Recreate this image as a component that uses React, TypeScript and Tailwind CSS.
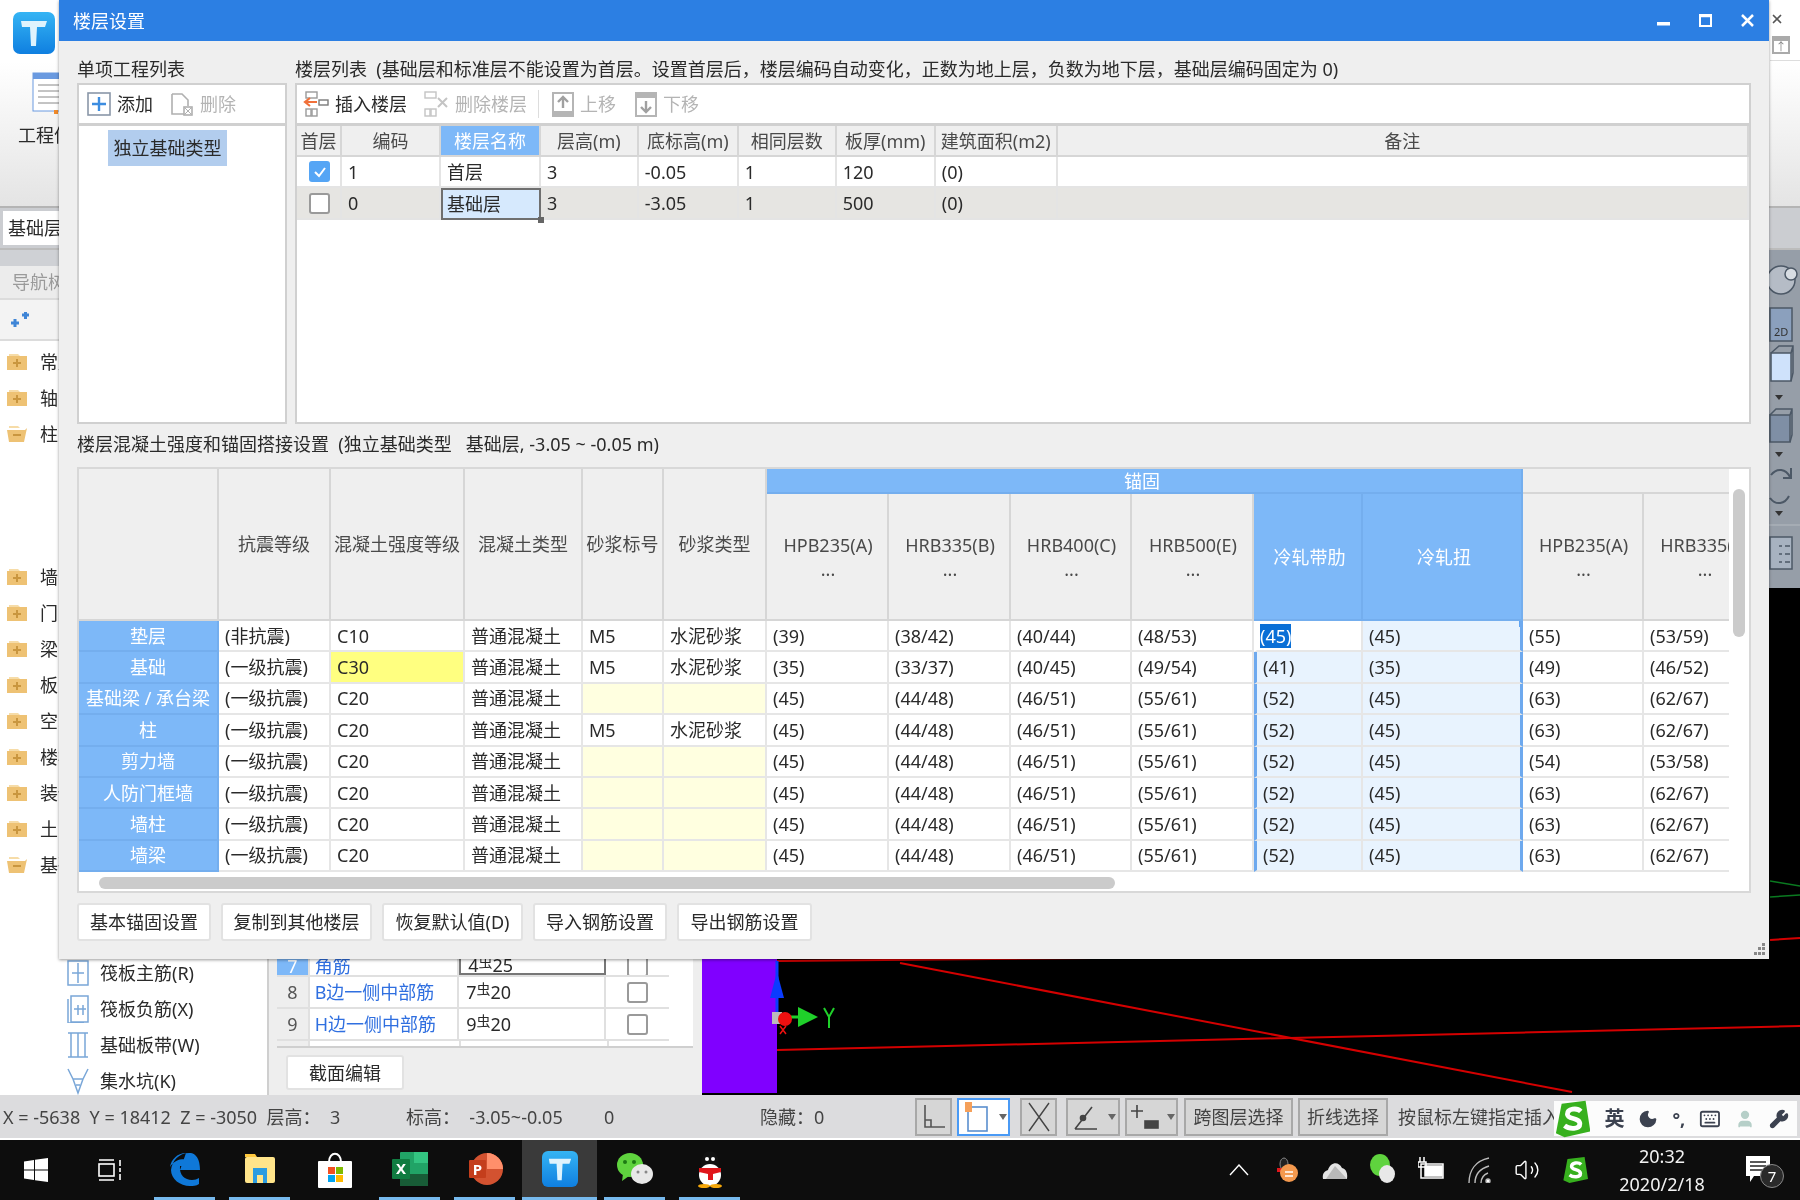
import { Keyboard, Moon, User, Volume2, Wrench, X } from "lucide-react"
import type { ReactNode } from "react"

const upperCols = [45, 99, 100, 98, 100, 98, 99, 122, 692]
const lowerCols = [140, 112, 134, 118, 81, 103, 122, 122, 121, 122, 109, 160, 121, 122]

const rows = [
  ["垫层", "(非抗震)", "C10", "M5", "水泥砂浆", "(39)", "(38/42)", "(40/44)", "(48/53)", "(45)", "(45)", "(55)", "(53/59)"],
  ["基础", "(一级抗震)", "C30", "M5", "水泥砂浆", "(35)", "(33/37)", "(40/45)", "(49/54)", "(41)", "(35)", "(49)", "(46/52)"],
  ["基础梁 / 承台梁", "(一级抗震)", "C20", "", "", "(45)", "(44/48)", "(46/51)", "(55/61)", "(52)", "(45)", "(63)", "(62/67)"],
  ["柱", "(一级抗震)", "C20", "M5", "水泥砂浆", "(45)", "(44/48)", "(46/51)", "(55/61)", "(52)", "(45)", "(63)", "(62/67)"],
  ["剪力墙", "(一级抗震)", "C20", "", "", "(45)", "(44/48)", "(46/51)", "(55/61)", "(52)", "(45)", "(54)", "(53/58)"],
  ["人防门框墙", "(一级抗震)", "C20", "", "", "(45)", "(44/48)", "(46/51)", "(55/61)", "(52)", "(45)", "(63)", "(62/67)"],
  ["墙柱", "(一级抗震)", "C20", "", "", "(45)", "(44/48)", "(46/51)", "(55/61)", "(52)", "(45)", "(63)", "(62/67)"],
  ["墙梁", "(一级抗震)", "C20", "", "", "(45)", "(44/48)", "(46/51)", "(55/61)", "(52)", "(45)", "(63)", "(62/67)"],
]

const navItems = [
  { name: "常用构件类型", open: false },
  { name: "轴线", open: false },
  { name: "柱", open: true },
]
const navItems2 = ["墙", "门窗洞", "梁", "板", "空心楼盖", "楼梯", "装修", "土方"]

function Folder({ open }: { open?: boolean }) {
  return (
    <svg width="22" height="20" viewBox="0 0 22 20" className="shrink-0">
      <path d="M3 2h9l2 2H3z" fill="#f6dca8" />
      <path d={open ? "M1 6h18l2-2-3 14H3z" : "M1 4h20v14H1z"} fill="#eec274" />
      <path d={open ? "M7 11h8" : "M11 7v8M7 11h8"} stroke="#c9963f" strokeWidth="2" />
    </svg>
  )
}

function TLogo({ size = 42 }: { size?: number }) {
  return (
    <svg width={size} height={size} viewBox="0 0 42 42" className="shrink-0">
      <defs>
        <linearGradient id="tlogo" x1="0" y1="0" x2="0" y2="1">
          <stop offset="0" stopColor="#35b4f4" />
          <stop offset="1" stopColor="#0f7fe0" />
        </linearGradient>
      </defs>
      <rect width="42" height="42" rx="7" fill="url(#tlogo)" />
      <path d="M8 9h26l-2 6H24l-1 19h-5l-1-19H9z" fill="#dff3fd" />
    </svg>
  )
}

function SLogo({ size = 38 }: { size?: number }) {
  return (
    <svg width={size} height={size} viewBox="0 0 38 38">
      <path d="M8 3 33 0l5 32-27 6L2 34z" fill="#37b01e" />
      <path d="M28 11c-4-4-14-3-14 3 0 6 13 3 13 10 0 6-11 6-16 2" fill="none" stroke="#fff" strokeWidth="5" />
    </svg>
  )
}

function ToolBtn({ icon, label, disabled, width }: { icon: ReactNode; label: string; disabled?: boolean; width: string }) {
  return (
    <div className={`flex h-[36px] items-center gap-[6px] pl-[5px] ${width} ${disabled ? "text-[#b4b4b4]" : "text-[#2a2a2a]"}`}>
      {icon}
      <span>{label}</span>
    </div>
  )
}

function MoveIcon({ down }: { down?: boolean }) {
  return (
    <svg width="22" height="25" viewBox="0 0 22 25">
      <rect x="1" y="1" width="20" height="23" fill="#fff" stroke="#b5b5b5" strokeWidth="2" />
      <rect x="1" y={down ? 1 : 19} width="20" height="5" fill="#b5b5b5" />
      <path d={down ? "M11 9v11M6 15l5 5 5-5" : "M11 16V5M6 10l5-5 5 5"} fill="none" stroke="#a0a0a0" strokeWidth="2.4" />
    </svg>
  )
}

function UpperTable() {
  const base = "border-r-2 border-b-2 border-[#d6d6d6] font-normal p-0 whitespace-nowrap"
  const head = `${base} bg-[#efefef] text-[#4a4a4a]`
  const cell = "border-r-2 border-b-2 border-[#e4e4e4] px-[6px] text-[#2a2a2a]"
  return (
    <table className="table-fixed border-separate border-spacing-0">
      <colgroup>
        {upperCols.map((w, i) => (
          <col key={i} style={{ width: w }} />
        ))}
      </colgroup>
      <thead>
        <tr className="h-[31px]">
          <th className={head}>首层</th>
          <th className={head}>编码</th>
          <th className={`${base} bg-[#7db8f8] text-white`}>楼层名称</th>
          <th className={head}>层高(m)</th>
          <th className={head}>底标高(m)</th>
          <th className={head}>相同层数</th>
          <th className={head}>板厚(mm)</th>
          <th className={head}>建筑面积(m2)</th>
          <th className={head}>备注</th>
        </tr>
      </thead>
      <tbody>
        <tr className="h-[31px]">
          <td className={`${cell} pl-[12px]`}>
            <div className="flex h-[21px] w-[21px] items-center justify-center rounded-[3px] bg-[#55a5f5]">
              <svg width="14" height="12" viewBox="0 0 14 12">
                <path d="M2 6l4 4 6-8" fill="none" stroke="#fff" strokeWidth="2" />
              </svg>
            </div>
          </td>
          <td className={cell}>1</td>
          <td className={cell}>首层</td>
          <td className={cell}>3</td>
          <td className={cell}>-0.05</td>
          <td className={cell}>1</td>
          <td className={cell}>120</td>
          <td className={cell}>(0)</td>
          <td className={cell}></td>
        </tr>
        <tr className="h-[32px] bg-[#e6e5e2]">
          <td className={`${cell} pl-[12px]`}>
            <div className="h-[21px] w-[21px] rounded-[3px] border-2 border-[#9a9a9a] bg-white" />
          </td>
          <td className={cell}>0</td>
          <td className="relative border-2 border-[#6f6f6f] bg-[#d6e9fd] px-[4px] text-[#2a2a2a]">
            基础层
            <span className="absolute -right-[5px] -bottom-[5px] h-[6px] w-[6px] bg-[#666]" />
          </td>
          <td className={cell}>3</td>
          <td className={cell}>-3.05</td>
          <td className={cell}>1</td>
          <td className={cell}>500</td>
          <td className={cell}>(0)</td>
          <td className={cell}></td>
        </tr>
      </tbody>
    </table>
  )
}

function LowerTable() {
  const head = "border-r-2 border-b-2 border-[#d6d6d6] bg-[#efefef] font-normal text-[#4a4a4a] p-0 whitespace-nowrap"
  const blue = "border-r-2 border-b-2 border-[#74aeee] bg-[#7db8f8] font-normal text-white p-0"
  const cell = "border-r-2 border-b-2 border-[#e6e6e6] px-[6px] text-[#2a2a2a] whitespace-nowrap overflow-hidden"
  const steel = (name: string) => (
    <div className="flex flex-col items-center gap-[6px] pl-[2px]">
      <span>{name}</span>
      <span>...</span>
    </div>
  )
  return (
    <table className="table-fixed border-separate border-spacing-0" style={{ width: lowerCols.reduce((a, b) => a + b, 0) }}>
      <colgroup>
        {lowerCols.map((w, i) => (
          <col key={i} style={{ width: w }} />
        ))}
      </colgroup>
      <thead>
        <tr className="h-[25px]">
          <th rowSpan={2} className={head}></th>
          <th rowSpan={2} className={head}>抗震等级</th>
          <th rowSpan={2} className={head}>混凝土强度等级</th>
          <th rowSpan={2} className={head}>混凝土类型</th>
          <th rowSpan={2} className={head}>砂浆标号</th>
          <th rowSpan={2} className={head}>砂浆类型</th>
          <th colSpan={6} className={`${blue} pr-[4px]`}>锚固</th>
          <th colSpan={2} className={head}></th>
        </tr>
        <tr className="h-[127px]">
          <th className={head}>{steel("HPB235(A)")}</th>
          <th className={head}>{steel("HRB335(B)")}</th>
          <th className={head}>{steel("HRB400(C)")}</th>
          <th className={head}>{steel("HRB500(E)")}</th>
          <th className={`${blue} pl-[4px]`}>冷轧带肋</th>
          <th className={`${blue} pl-[4px]`}>冷轧扭</th>
          <th className={head}>{steel("HPB235(A)")}</th>
          <th className={head}>{steel("HRB335(B)")}</th>
        </tr>
      </thead>
      <tbody>
        {rows.map((r, i) => (
          <tr key={i} className="h-[31.4px]">
            <td className="border-r-2 border-b-2 border-[#74aeee] bg-[#7db8f8] p-0 text-center whitespace-nowrap text-white">{r[0]}</td>
            <td className={cell}>{r[1]}</td>
            <td className={`${cell} ${r[2] === "C30" ? "bg-[#ffff80]" : ""}`}>{r[2]}</td>
            <td className={cell}>普通混凝土</td>
            <td className={`${cell} ${r[3] ? "" : "bg-[#ffffe0]"}`}>{r[3]}</td>
            <td className={`${cell} ${r[4] ? "" : "bg-[#ffffe0]"}`}>{r[4]}</td>
            {r.slice(5).map((v, j) => {
              if (j === 4) {
                return (
                  <td key={j} className={`${cell} border-l-[3px] ${i === 0 ? "border-l-white bg-white !pl-[3px]" : "border-l-[#6ea9ee] bg-[#e8f3fe]"}`}>
                    {i === 0 ? <span className="bg-[#0a6fd6] text-white">{v}</span> : v}
                  </td>
                )
              }
              if (j === 5) {
                return (
                  <td key={j} className={`${cell} relative border-r-[3px] border-r-[#6ea9ee] bg-[#e8f3fe]`}>
                    {v}
                    {i === 0 && <span className="absolute top-0 -right-[5px] h-[6px] w-[6px] bg-[#5fa4f2]" />}
                  </td>
                )
              }
              return (
                <td key={j} className={cell}>
                  {v}
                </td>
              )
            })}
            <td className={cell}></td>
          </tr>
        ))}
      </tbody>
    </table>
  )
}

function FloorDialog() {
  return (
    <div className="absolute top-0 left-[59px] flex h-[959px] w-[1710px] flex-col bg-[#efefef] shadow-[0_1px_3px_rgba(0,0,0,0.4)]">
      <div className="flex h-[41px] shrink-0 items-center bg-[#2c7fe3] pr-[15px] pl-[14px] text-white">
        <span>楼层设置</span>
        <div className="ml-auto flex items-center gap-[29px]">
          <svg width="13" height="13" viewBox="0 0 13 13">
            <rect x="0" y="8" width="13" height="3.5" fill="#fff" />
          </svg>
          <svg width="13" height="13" viewBox="0 0 13 13" fill="none" stroke="#fff" strokeWidth="2">
            <rect x="1" y="1" width="11" height="11" />
            <path d="M0 2h13" strokeWidth="2.5" />
          </svg>
          <svg width="13" height="13" viewBox="0 0 13 13" fill="none" stroke="#fff" strokeWidth="2.5">
            <path d="M1 1l11 11M12 1 1 12" />
          </svg>
        </div>
      </div>
      <div className="flex flex-1 flex-col px-[18px] pt-[19px]">
        <div className="flex h-[364px] shrink-0 gap-[8px]">
          <div className="flex w-[210px] shrink-0 flex-col">
            <div className="h-[23px] text-[#2a2a2a]">单项工程列表</div>
            <div className="flex flex-1 flex-col border-2 border-[#d0d0d0] bg-white">
              <div className="flex h-[41px] shrink-0 items-center gap-[2px] border-b-3 border-[#d0d0d0] pl-[3px]">
                <ToolBtn
                  width="w-[81px]"
                  label="添加"
                  icon={
                    <svg width="24" height="24" viewBox="0 0 24 24">
                      <rect x="1" y="1" width="22" height="22" fill="none" stroke="#8a97a8" strokeWidth="1.6" />
                      <path d="M12 5v14M5 12h14" stroke="#3d8de0" strokeWidth="2.4" />
                    </svg>
                  }
                />
                <ToolBtn
                  width="w-[78px]"
                  disabled
                  label="删除"
                  icon={
                    <svg width="24" height="24" viewBox="0 0 24 24" fill="none" stroke="#b0b0b0" strokeWidth="1.6">
                      <path d="M2 2h10l6 6v6M2 2v20h12" />
                      <rect x="14" y="15" width="8" height="8" />
                      <path d="M15 16l6 6M21 16l-6 6" strokeWidth="1" />
                    </svg>
                  }
                />
              </div>
              <div className="pt-[4px] pl-[29px]">
                <div className="flex h-[36px] w-[119px] items-center justify-center bg-[#b2cdee] text-[#2a2a2a]">独立基础类型</div>
              </div>
            </div>
          </div>
          <div className="flex flex-1 flex-col overflow-hidden">
            <div className="h-[23px] whitespace-pre text-[#2a2a2a]">
              楼层列表  (基础层和标准层不能设置为首层。设置首层后，楼层编码自动变化，正数为地上层，负数为地下层，基础层编码固定为 0)
            </div>
            <div className="flex flex-1 flex-col overflow-hidden border-2 border-[#d0d0d0] bg-white">
              <div className="flex h-[41px] shrink-0 items-center border-b-3 border-[#d0d0d0] pl-[1px]">
                <ToolBtn
                  width="w-[120px]"
                  label="插入楼层"
                  icon={
                    <svg width="26" height="26" viewBox="0 0 26 26" fill="none" stroke="#9a9a9a" strokeWidth="1.4">
                      <rect x="3" y="1" width="11" height="6" />
                      <rect x="3" y="18" width="5" height="7" />
                      <rect x="9" y="18" width="5" height="7" />
                      <rect x="16" y="9" width="9" height="5" stroke="#7a7a7a" />
                      <path d="M14 11H3M7 7l-5 4 5 4" stroke="#f0703a" strokeWidth="2.2" />
                    </svg>
                  }
                />
                <ToolBtn
                  width="w-[120px]"
                  disabled
                  label="删除楼层"
                  icon={
                    <svg width="26" height="26" viewBox="0 0 26 26" fill="none" stroke="#c4c4c4" strokeWidth="1.4">
                      <rect x="2" y="1" width="11" height="6" />
                      <rect x="2" y="18" width="5" height="7" />
                      <rect x="8" y="18" width="5" height="7" />
                      <path d="M15 7l9 9M24 7l-9 9" strokeWidth="2" />
                    </svg>
                  }
                />
                <div className="mr-[8px] h-[28px] w-px bg-[#ddd]" />
                <ToolBtn width="w-[83px]" disabled label="上移" icon={<MoveIcon />} />
                <ToolBtn width="w-[83px]" disabled label="下移" icon={<MoveIcon down />} />
              </div>
              <UpperTable />
            </div>
          </div>
        </div>
        <div className="flex h-[43px] shrink-0 items-center whitespace-pre pb-[3px] text-[#2a2a2a]">
          楼层混凝土强度和锚固搭接设置  (独立基础类型   基础层, -3.05 ~ -0.05 m)
        </div>
        <div className="flex h-[426px] shrink-0 flex-col border-2 border-[#d8d8d8] bg-white">
          <div className="flex h-[404px] shrink-0">
            <div className="h-full w-[1650px] overflow-hidden">
              <LowerTable />
            </div>
            <div className="ml-[4px] pt-[20px]">
              <div className="h-[148px] w-[12px] rounded-full bg-[#cbcbcb]" />
            </div>
          </div>
          <div className="mt-[4px] ml-[20px] h-[12px] w-[1016px] rounded-full bg-[#cbcbcb]" />
        </div>
        <div className="mt-[10px] flex gap-[10px] text-[#2a2a2a]">
          {[
            ["基本锚固设置", "w-[134px]"],
            ["复制到其他楼层", "w-[151px]"],
            ["恢复默认值(D)", "w-[141px]"],
            ["导入钢筋设置", "w-[134px]"],
            ["导出钢筋设置", "w-[135px]"],
          ].map(([label, w]) => (
            <div key={label} className={`flex h-[38px] items-center justify-center rounded-[3px] border-2 border-[#e2e2e2] bg-white whitespace-nowrap ${w}`}>
              {label}
            </div>
          ))}
        </div>
      </div>
      <svg width="14" height="14" viewBox="0 0 14 14" className="absolute right-[3px] bottom-[3px]" fill="#888">
        <rect x="10" y="1" width="3" height="3" />
        <rect x="6" y="5" width="3" height="3" />
        <rect x="10" y="5" width="3" height="3" />
        <rect x="2" y="10" width="3" height="3" />
        <rect x="6" y="10" width="3" height="3" />
        <rect x="10" y="10" width="3" height="3" />
      </svg>
    </div>
  )
}

function Sidebar() {
  const bottomNav = [
    { label: "筏板主筋(R)", d: "M2 2h20v24H2zM12 4v20M6 14h12" },
    { label: "筏板负筋(X)", d: "M5 1h17v26H5zM2 4v24h16M8 14h12M12 10v10M17 10v10" },
    { label: "基础板带(W)", d: "M2 2h20M2 26h20M5 2v24M12 2v24M19 2v24" },
    { label: "集水坑(K)", d: "M2 2l5 10h10l5-10M7 12l5 14 5-14M10 18h4" },
  ]
  return (
    <div className="flex w-[269px] shrink-0 flex-col overflow-hidden border-r-2 border-[#cfcfcf] bg-white">
      <div className="h-[16px] shrink-0 bg-[#cfd1d5]" />
      <div className="flex h-[34px] shrink-0 items-center border-b-2 border-[#dcdcdc] bg-[#ececec] pl-[12px] text-[#9a9a9a]">导航树</div>
      <div className="flex h-[41px] shrink-0 items-center border-b-2 border-[#dcdcdc] bg-[#f3f3f3] pl-[10px]">
        <svg width="20" height="20" viewBox="0 0 20 20" stroke="#3f85d6" strokeWidth="3">
          <path d="M1 13h8M5 9v8M12 5h7M15.5 2v7" />
        </svg>
      </div>
      <div className="flex flex-col pt-[3px]">
        {navItems.map((n) => (
          <div key={n.name} className="flex h-[36px] items-center gap-[12px] pl-[6px] whitespace-nowrap text-[#2a2a2a]">
            <Folder open={n.open} />
            {n.name}
          </div>
        ))}
        <div className="h-[107px]" />
        {navItems2.map((n) => (
          <div key={n} className="flex h-[36px] items-center gap-[12px] pl-[6px] whitespace-nowrap text-[#2a2a2a]">
            <Folder />
            {n}
          </div>
        ))}
        <div className="flex h-[36px] items-center gap-[12px] pl-[6px] whitespace-nowrap text-[#2a2a2a]">
          <Folder open />
          基础
        </div>
        <div className="h-[72px]" />
        {bottomNav.map((n) => (
          <div key={n.label} className="flex h-[36px] items-center gap-[10px] pl-[66px] whitespace-nowrap text-[#2a2a2a]">
            <svg width="24" height="28" viewBox="0 0 24 28" fill="none" stroke="#7aa7d8" strokeWidth="1.5" className="shrink-0">
              <path d={n.d} />
            </svg>
            {n.label}
          </div>
        ))}
      </div>
    </div>
  )
}

function SectionPanel() {
  const rebarRows = [
    { no: "7", name: "角筋", value: "4", dia: "25", on: true },
    { no: "8", name: "B边一侧中部筋", value: "7", dia: "20" },
    { no: "9", name: "H边一侧中部筋", value: "9", dia: "20" },
  ]
  return (
    <div className="flex w-[433px] shrink-0 flex-col justify-end bg-[#eeeeee] pl-[8px]">
      <div className="w-[416px] border-b-2 border-[#cfcfcf] bg-white pr-[24px]">
        {rebarRows.map((r) => (
          <div key={r.no} className={`flex border-b-2 border-[#e0e0e0] ${r.on ? "h-[20px] items-end overflow-hidden" : "h-[32px] items-center"}`}>
            <div className={`flex h-full w-[33px] items-center justify-center border-r-2 border-[#e0e0e0] text-[#555] ${r.on ? "bg-[#7db8f8] text-white" : "bg-[#eee]"}`}>{r.no}</div>
            <div className="flex h-full w-[151px] items-center border-r-2 border-[#e0e0e0] pl-[5px] text-[#2f6fe0]">{r.name}</div>
            <div className={`flex h-full w-[148px] items-center pl-[7px] text-[#2a2a2a] ${r.on ? "border-x-2 border-b-2 border-[#777]" : "border-r-2 border-[#e0e0e0]"}`}>
              {r.value}
              <span className="relative -top-[3px] text-[14px]">虫</span>
              {r.dia}
            </div>
            <div className="flex h-full w-[64px] items-center justify-center">
              <div className="h-[21px] w-[21px] shrink-0 rounded-[3px] border-2 border-[#9a9a9a] bg-white" />
            </div>
          </div>
        ))}
        <div className="flex h-[5px] w-full overflow-hidden">
          <div className="h-full w-[33px] border-r-2 border-[#e0e0e0] bg-[#eee]" />
          <div className="h-full w-[151px] border-r-2 border-[#e0e0e0]" />
          <div className="h-full w-[148px] border-r-2 border-[#e0e0e0]" />
        </div>
      </div>
      <div className="flex h-[47px] items-start pt-[7px] pl-[9px]">
        <div className="flex h-[35px] w-[118px] items-center justify-center rounded-[3px] border-2 border-[#e2e2e2] bg-white text-[#2a2a2a]">截面编辑</div>
      </div>
    </div>
  )
}

function Canvas() {
  return (
    <div className="relative flex-1 overflow-hidden bg-black">
      <svg width="1098" height="843" viewBox="0 0 1098 843" className="absolute inset-0">
        <rect x="0" width="75" height="843" fill="#8000ff" />
        <g stroke="#d40000" strokeWidth="2" fill="none">
          <path d="M75 711 498 707" />
          <path d="M198 713 870 842" />
          <path d="M75 800 1098 776" />
          <path d="M1068 690l30-2" />
        </g>
        <path d="M1068 631l30 5M1068 647l30-2" stroke="#0a7a20" strokeWidth="1.5" />
        <path d="M75 711v54" stroke="#0b3cff" strokeWidth="3" />
        <path d="M75 722l-7 26h14z" fill="#0b3cff" />
        <path d="M96 767h-14" stroke="#1fd02a" strokeWidth="3" />
        <path d="M96 757l20 10-20 10z" fill="#1fd02a" />
        <rect x="70" y="762" width="10" height="12" fill="#bbb" />
        <circle cx="83" cy="769" r="7" fill="#f01010" />
        <path d="M78 776l6 8M84 776l-6 8" stroke="#f01010" strokeWidth="1.5" />
        <path d="M122 758l5 9 5-9M127 767v11" stroke="#1fd02a" strokeWidth="2" fill="none" />
      </svg>
      <div className="absolute top-0 right-0 flex h-[338px] w-[31px] flex-col items-start bg-[#969ea8]">
        <svg width="31" height="338" viewBox="0 0 31 338" fill="none" stroke="#4c5866" strokeWidth="1.5">
          <circle cx="12" cy="30" r="14" fill="#b5bcc6" />
          <circle cx="22" cy="24" r="6" fill="#d8dde3" />
          <rect x="1" y="58" width="22" height="33" fill="#8ba0bd" />
          <rect x="2" y="103" width="20" height="28" fill="#cfe2fb" />
          <path d="M2 103l8-7h14v27l-2 8M22 103l2-7" />
          <path d="M6 145h8l-4 5z" fill="#333" stroke="none" />
          <rect x="1" y="165" width="20" height="27" fill="#7f8fa5" />
          <path d="M1 165l6-6h16v26l-2 7M21 165l2-6" />
          <path d="M6 202h8l-4 5z" fill="#333" stroke="none" />
          <path d="M2 225c6-8 15-6 19 2M22 218v10h-8M1 248c6 8 15 6 19-2" strokeWidth="2" />
          <path d="M6 261h8l-4 5z" fill="#333" stroke="none" />
          <path d="M0 275h31" stroke="#aab0b8" />
          <rect x="1" y="287" width="22" height="32" fill="#a7b2c0" />
          <path d="M10 296h3M10 304h3M10 312h3M16 296h5M16 304h5M16 312h5" />
        </svg>
        <span className="absolute top-[76px] left-[5px] text-[11px] leading-none text-[#333]">2D</span>
      </div>
    </div>
  )
}

function TaskItem({ children, line, active }: { children: ReactNode; line?: boolean; active?: boolean }) {
  return (
    <div className={`flex h-full w-[75px] shrink-0 flex-col items-center ${active ? "bg-[#3a3a3a]" : ""}`}>
      <div className="flex flex-1 items-center justify-center">{children}</div>
      {line ? <div className={`h-[3px] ${active ? "w-full" : "w-[61px]"} bg-[#76b9ed]`} /> : null}
    </div>
  )
}

function Taskbar() {
  return (
    <div className="flex h-[60px] shrink-0 items-center bg-[#0d0d0d] text-white">
      <div className="flex h-full w-[72px] shrink-0 items-center justify-center">
        <svg width="24" height="24" viewBox="0 0 24 24" fill="#fff">
          <path d="M0 3.5 10 2v9.5H0zM11 1.8 24 0v11.5H11zM0 12.5h10V22L0 20.5zM11 12.5h13V24l-13-1.8z" />
        </svg>
      </div>
      <div className="flex h-full w-[75px] shrink-0 items-center justify-center">
        <svg width="24" height="24" viewBox="0 0 24 24" fill="none" stroke="#fff" strokeWidth="1.6">
          <rect x="1" y="6" width="15" height="12" />
          <path d="M1 2h15M1 22h15M22 2v6M22 10v4M22 16v6" />
        </svg>
      </div>
      <TaskItem line>
        <svg width="32" height="34" viewBox="0 0 32 34">
          <path d="M17 1C8 1 2 8 1 15c3-5 8-8 14-8 5 0 8 3 8 7H11c-1 9 5 14 12 14 3 0 5-1 7-2v6c-3 2-6 2-9 2C11 34 2 27 2 18 3 8 11 0 22 1c5 1 9 6 9 17H11" fill="#0f78d8" />
        </svg>
      </TaskItem>
      <TaskItem line>
        <svg width="32" height="32" viewBox="0 0 32 32">
          <path d="M1 1h10l2 3h-12z" fill="#ffc83d" />
          <rect x="1" y="4" width="30" height="26" rx="2" fill="#ffe48a" />
          <rect x="9" y="15" width="14" height="15" fill="#2a9be0" />
          <rect x="13" y="22" width="6" height="8" fill="#ffe48a" />
        </svg>
      </TaskItem>
      <TaskItem>
        <svg width="36" height="36" viewBox="0 0 36 36">
          <path d="M12 10c0-11 12-11 12 0" fill="none" stroke="#fff" strokeWidth="2" />
          <rect x="1" y="9" width="34" height="27" rx="1" fill="#fff" />
          <rect x="11" y="15" width="7" height="7" fill="#f25022" />
          <rect x="19" y="15" width="7" height="7" fill="#7fba00" />
          <rect x="11" y="23" width="7" height="7" fill="#00a4ef" />
          <rect x="19" y="23" width="7" height="7" fill="#ffb900" />
        </svg>
      </TaskItem>
      <TaskItem line>
        <svg width="36" height="36" viewBox="0 0 36 36">
          <rect x="8" y="1" width="28" height="34" rx="1" fill="#21a366" />
          <rect x="22" y="1" width="14" height="11" fill="#33c481" />
          <rect x="8" y="23" width="28" height="12" fill="#185c37" />
          <rect x="0" y="8" width="18" height="20" rx="1" fill="#107c41" />
          <text x="9" y="23" fontSize="15" fontWeight="700" textAnchor="middle" fill="#fff">X</text>
        </svg>
      </TaskItem>
      <TaskItem line>
        <svg width="36" height="36" viewBox="0 0 36 36">
          <circle cx="20" cy="18" r="16" fill="#d35230" />
          <path d="M20 2a16 16 0 0 1 16 16H20z" fill="#ff8f6b" />
          <rect x="2" y="9" width="17" height="18" rx="1" fill="#c43e1c" />
          <text x="10.5" y="24" fontSize="15" fontWeight="700" textAnchor="middle" fill="#fff">P</text>
        </svg>
      </TaskItem>
      <TaskItem line active>
        <TLogo size={36} />
      </TaskItem>
      <TaskItem line>
        <svg width="38" height="34" viewBox="0 0 38 34">
          <ellipse cx="14" cy="13" rx="13" ry="12" fill="#5fd33e" />
          <path d="M7 22l-1 7 7-5z" fill="#5fd33e" />
          <ellipse cx="26" cy="22" rx="11" ry="10" fill="#e8e8e8" />
          <circle cx="9" cy="10" r="2" fill="#1d7a14" />
          <circle cx="18" cy="10" r="2" fill="#1d7a14" />
          <circle cx="22" cy="20" r="1.5" fill="#888" />
          <circle cx="30" cy="20" r="1.5" fill="#888" />
        </svg>
      </TaskItem>
      <TaskItem line>
        <svg width="32" height="38" viewBox="0 0 32 38">
          <ellipse cx="16" cy="13" rx="9" ry="12" fill="#111" />
          <ellipse cx="16" cy="25" rx="11" ry="11" fill="#fff" />
          <path d="M5 18h22v4l-8 2v6h-5v-6l-9-2z" fill="#e0161b" />
          <ellipse cx="10" cy="36" rx="6" ry="2" fill="#f5a70a" />
          <ellipse cx="22" cy="36" rx="6" ry="2" fill="#f5a70a" />
          <circle cx="13" cy="9" r="2" fill="#fff" />
          <circle cx="19" cy="9" r="2" fill="#fff" />
        </svg>
      </TaskItem>
      <div className="ml-auto flex h-full items-center">
        {[
          <svg key="up" width="20" height="12" viewBox="0 0 20 12" fill="none" stroke="#fff" strokeWidth="1.4"><path d="M1 11l9-10 9 10" /></svg>,
          <svg key="qq" width="22" height="28" viewBox="0 0 22 28"><ellipse cx="8" cy="8" rx="4" ry="6" fill="#222" stroke="#888" /><rect x="1" y="12" width="10" height="4" fill="#e0161b" /><circle cx="13" cy="17" r="9" fill="#f4994e" /><path d="M9 16h8M9 20h8" stroke="#fff" strokeWidth="1.5" /></svg>,
          <svg key="cloud" width="26" height="22" viewBox="0 0 26 22"><path d="M1 20c-1-6 2-8 5-9 2-7 10-10 14-2 4 1 6 5 5 11z" fill="#e4e4e4" /><path d="M13 7 25 20H4z" fill="#8d8d8d" opacity="0.5" /></svg>,
          <svg key="wx" width="26" height="32" viewBox="0 0 26 32"><ellipse cx="10" cy="11" rx="10" ry="11" fill="#5fd33e" /><ellipse cx="17" cy="20" rx="8" ry="9" fill="#e8e8e8" /></svg>,
          <svg key="bat" width="26" height="26" viewBox="0 0 26 26" fill="none" stroke="#fff" strokeWidth="1.5"><rect x="3" y="7" width="22" height="14" /><rect x="7" y="9" width="17" height="10" fill="#fff" /><path d="M2 0v5M6 0v5M0 5h8v5H0z" /></svg>,
          <svg key="wifi" width="24" height="26" viewBox="0 0 24 26" fill="none" stroke="#bbb" strokeWidth="1.4"><path d="M2 26C2 14 8 4 22 1M8 26c0-8 4-14 14-17M14 26c0-4 2-8 7-10" /><circle cx="21" cy="24" r="2" fill="#fff" /></svg>,
          <Volume2 key="vol" size={26} strokeWidth={1.3} color="#fff" />,
          <SLogo key="s" size={26} />,
        ].map((icon, i) => (
          <div key={i} className="flex h-full w-[48px] items-center justify-center">
            {icon}
          </div>
        ))}
        <div className="flex w-[126px] flex-col items-center gap-[6px] text-[#f2f2f2]">
          <span className="leading-[22px]">20:32</span>
          <span className="leading-[22px]">2020/2/18</span>
        </div>
        <div className="relative mr-[9px] flex h-full w-[66px] items-center justify-center">
          <svg width="26" height="30" viewBox="0 0 26 30">
            <path d="M1 1h24v20H9l-4 6v-6H1z" fill="#fff" />
            <path d="M5 7h16M5 11h16M5 15h16" stroke="#222" strokeWidth="1.4" />
          </svg>
          <span className="absolute top-[24px] left-[35px] flex h-[24px] w-[24px] items-center justify-center rounded-full border border-[#888] bg-[#2a2a2a] text-[15px] leading-none text-white">7</span>
        </div>
      </div>
    </div>
  )
}

function StatusBar() {
  return (
    <div className="relative flex h-[43px] shrink-0 items-center whitespace-pre bg-[#dcdcde] text-[#444]">
      <div className="w-[406px] pl-[3px]">X = -5638  Y = 18412  Z = -3050  层高：  3</div>
      <div className="w-[198px]">标高：  -3.05~-0.05</div>
      <div className="w-[156px]">0</div>
      <div className="w-[155px]">隐藏：0</div>
      <div className="flex h-full items-center gap-[5px]">
        <div className="flex h-[38px] w-[37px] items-center justify-center border-2 border-[#a8a8a8] bg-[#d6d6d6]">
          <svg width="22" height="24" viewBox="0 0 22 24" fill="none" stroke="#555" strokeWidth="1.6"><path d="M2 0v22h20M2 15h6v7" /></svg>
        </div>
        <div className="flex h-[38px] w-[53px] items-center gap-[10px] border-2 border-[#4a9af5] bg-white pl-[6px]">
          <svg width="24" height="30" viewBox="0 0 24 30" fill="none"><rect x="3" y="5" width="19" height="24" stroke="#5a8fcf" strokeWidth="1.6" /><rect x="0" y="0" width="7" height="10" fill="#f5a05a" /></svg>
          <span className="h-0 w-0 border-x-[4px] border-t-[6px] border-x-transparent border-t-[#666]" />
        </div>
        <div className="ml-[5px] flex h-[38px] w-[37px] items-center justify-center border-2 border-[#a8a8a8] bg-[#d6d6d6]">
          <svg width="24" height="30" viewBox="0 0 24 30" fill="none" stroke="#444" strokeWidth="1.4"><path d="M2 1l20 28M22 1 2 29" /></svg>
        </div>
        <div className="ml-[4px] flex h-[38px] w-[54px] items-center gap-[8px] border-2 border-[#a8a8a8] bg-[#d6d6d6] pl-[6px]">
          <svg width="26" height="26" viewBox="0 0 26 26" fill="none" stroke="#444" strokeWidth="1.6"><path d="M1 25h22M1 25 18 3" /><circle cx="9" cy="14" r="2.5" fill="#444" /></svg>
          <span className="h-0 w-0 border-x-[4px] border-t-[6px] border-x-transparent border-t-[#666]" />
        </div>
        <div className="flex h-[38px] w-[53px] items-center gap-[8px] border-2 border-[#a8a8a8] bg-[#d6d6d6] pl-[4px]">
          <svg width="28" height="26" viewBox="0 0 28 26" fill="none" stroke="#444" strokeWidth="1.6"><path d="M6 1v13M0 7h12" /><rect x="14" y="17" width="13" height="7" fill="#444" /></svg>
          <span className="h-0 w-0 border-x-[4px] border-t-[6px] border-x-transparent border-t-[#666]" />
        </div>
        <div className="ml-[1px] flex h-[38px] w-[109px] items-center justify-center border-2 border-[#a8a8a8] bg-[#d6d6d6]">跨图层选择</div>
        <div className="flex h-[38px] w-[90px] items-center justify-center border-2 border-[#a8a8a8] bg-[#d6d6d6]">折线选择</div>
        <span className="ml-[5px] w-[156px] overflow-hidden">按鼠标左键指定插入点</span>
      </div>
      <div className="absolute top-[6px] left-[1554px] flex h-[35px] w-[243px] items-center gap-[14px] bg-white/90 pr-[8px] text-[#333]">
        <SLogo size={40} />
        <span className="text-[20px] font-bold text-[#3c4250]">英</span>
        <Moon size={22} fill="#3c4250" color="#3c4250" />
        <span className="text-[18px] font-bold text-[#3c4250]">°,</span>
        <Keyboard size={24} color="#3c4250" />
        <User size={22} fill="#b6cfc8" color="#b6cfc8" />
        <Wrench size={22} fill="#3c4250" color="#3c4250" />
      </div>
    </div>
  )
}

export default function App() {
  return (
    <div className="relative flex h-[1200px] w-[1800px] flex-col overflow-hidden bg-white font-['Noto_Sans','Noto_Sans_CJK_SC',sans-serif] text-[18px] leading-none blur-[0.5px]">
      <div className="relative h-[208px] shrink-0 border-b-2 border-[#b4b4b4] bg-gradient-to-b from-white from-30% to-[#e4e4e4]">
        <div className="pt-[12px] pl-[13px]">
          <TLogo />
        </div>
        <div className="mt-[18px] ml-[18px] flex w-[72px] flex-col items-start">
          <svg width="46" height="42" viewBox="0 0 46 42" className="ml-[14px]">
            <rect x="1" y="1" width="44" height="38" fill="#fff" stroke="#6a9ae0" />
            <rect x="1" y="1" width="44" height="6" fill="#6a9ae0" />
            <path d="M6 13h30M6 19h30M6 25h30M6 31h30" stroke="#888" />
            <rect x="22" y="38" width="4" height="4" fill="#f08a2a" />
          </svg>
          <span className="mt-[12px] whitespace-nowrap text-[#2a2a2a]">工程信息</span>
        </div>
        <div className="absolute top-[12px] right-[16px] text-[#555]">
          <X size={14} strokeWidth={3} />
        </div>
        <div className="absolute top-[36px] right-[10px] flex h-[18px] w-[18px] items-center justify-center border-2 border-t-[5px] border-[#aaa] bg-white text-[11px] text-[#888]">↑</div>
        <div className="absolute top-[60px] right-0 h-px w-[30px] bg-[#ddd]" />
      </div>
      <div className="flex h-[42px] shrink-0 items-center border-b-2 border-[#bcbcbc] bg-[#cbcdd1] pl-[3px]">
        <div className="flex h-[34px] w-[120px] items-center bg-white pl-[5px] text-[#2a2a2a]">基础层</div>
      </div>
      <div className="flex min-h-0 flex-1">
        <Sidebar />
        <SectionPanel />
        <Canvas />
      </div>
      <StatusBar />
      <div className="h-[2px] shrink-0 bg-white" />
      <Taskbar />
      <FloorDialog />
    </div>
  )
}
